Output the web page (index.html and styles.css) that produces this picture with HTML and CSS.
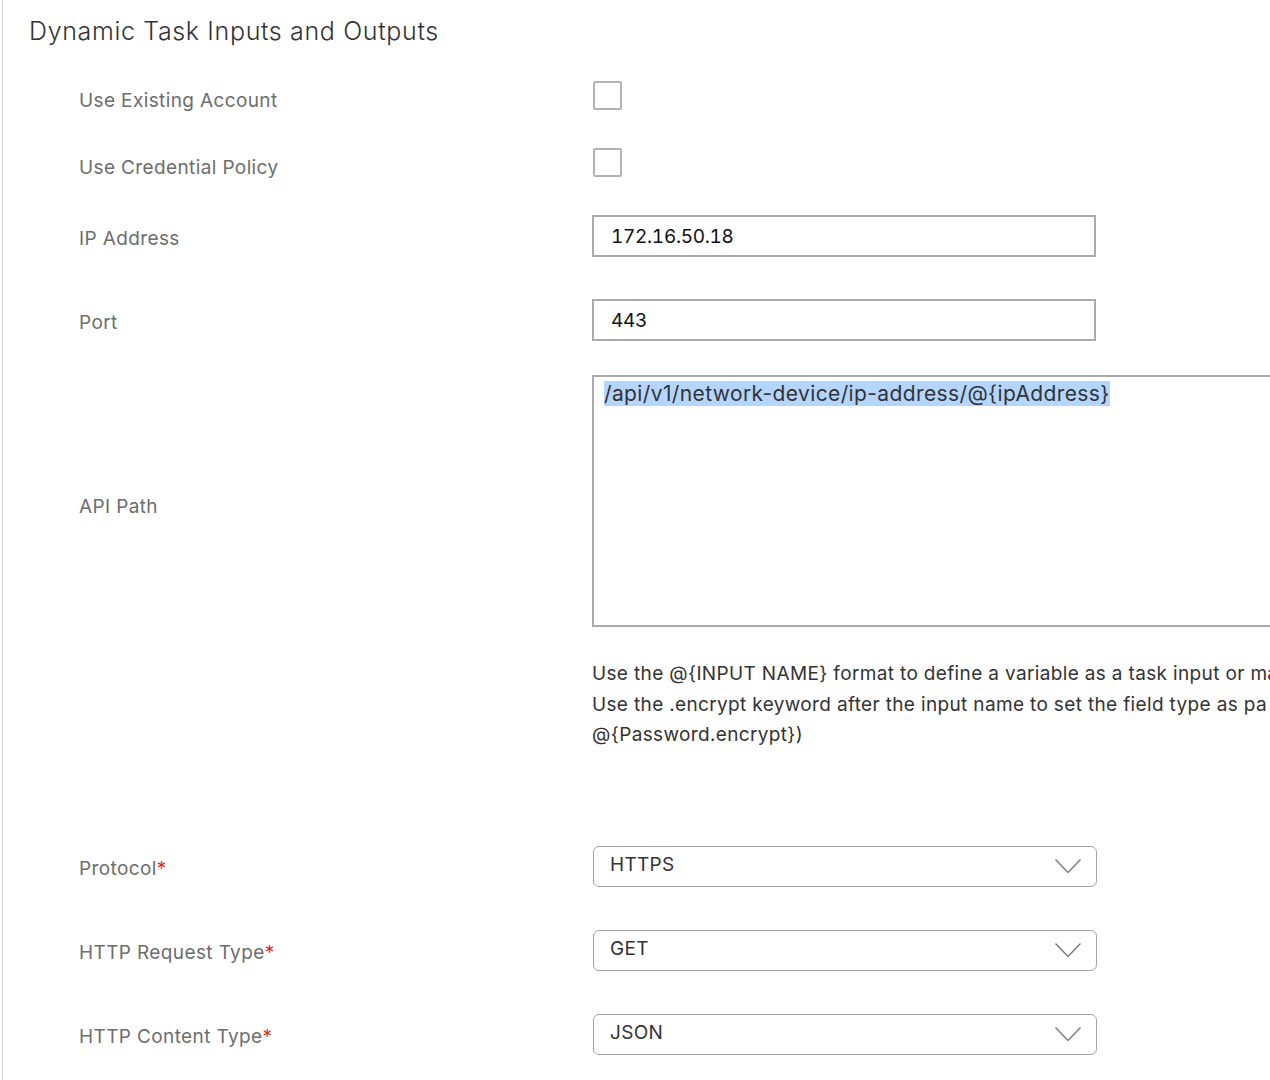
FILE: index.html
```html
<!DOCTYPE html>
<html lang="en">
<head>
<meta charset="utf-8">
<title>Dynamic Task Inputs and Outputs</title>
<link rel="stylesheet" href="styles.css">
</head>
<body>
<div class="panel">
  <h2 class="title">Dynamic Task Inputs and Outputs</h2>
  <div class="form">
    <div class="row row-check">
      <div class="label">Use Existing Account</div>
      <div class="control"><span class="checkbox"></span></div>
    </div>
    <div class="row row-check gap-check">
      <div class="label">Use Credential Policy</div>
      <div class="control"><span class="checkbox"></span></div>
    </div>
    <div class="row gap-check">
      <div class="label">IP Address</div>
      <div class="control"><div class="input">172.16.50.18</div></div>
    </div>
    <div class="row">
      <div class="label">Port</div>
      <div class="control"><div class="input">443</div></div>
    </div>
    <div class="row gap-s">
      <div class="label label-low">API Path</div>
      <div class="control"><div class="textarea"><span class="selected">/api/v1/network-device/ip-address/@{ipAddress}</span></div></div>
    </div>
    <div class="row gap-help">
      <div></div>
      <div class="help">Use the @{INPUT NAME} format to define a variable as a task input or ma<br>Use the .encrypt keyword after the input name to set the field type as pa<br>@{Password.encrypt})</div>
    </div>
    <div class="row gap-xl">
      <div class="label">Protocol<span class="req">*</span></div>
      <div class="control">
        <div class="select"><span>HTTPS</span>
          <svg class="chev" width="28" height="16" viewBox="0 0 28 16"><polyline points="1.5,1.5 14,14.5 26.5,1.5" fill="none" stroke="#7a7a7a" stroke-width="1.4"/></svg>
        </div>
      </div>
    </div>
    <div class="row gap-sel">
      <div class="label">HTTP Request Type<span class="req">*</span></div>
      <div class="control">
        <div class="select"><span>GET</span>
          <svg class="chev" width="28" height="16" viewBox="0 0 28 16"><polyline points="1.5,1.5 14,14.5 26.5,1.5" fill="none" stroke="#7a7a7a" stroke-width="1.4"/></svg>
        </div>
      </div>
    </div>
    <div class="row gap-sel">
      <div class="label">HTTP Content Type<span class="req">*</span></div>
      <div class="control">
        <div class="select"><span>JSON</span>
          <svg class="chev" width="28" height="16" viewBox="0 0 28 16"><polyline points="1.5,1.5 14,14.5 26.5,1.5" fill="none" stroke="#7a7a7a" stroke-width="1.4"/></svg>
        </div>
      </div>
    </div>
  </div>
</div>
</body>
</html>
```
FILE: styles.css
```css
html, body {
  margin: 0;
  padding: 0;
  background: #ffffff;
  overflow: hidden;
}
body {
  font-family: Inter, "Liberation Sans", sans-serif;
  color: #333333;
}
.panel {
  margin-left: 2px;
  border-left: 1px solid #d4d4d4;
  min-height: 1080px;
}
.title {
  margin: 0;
  padding: 16px 0 0 26px;
  font-size: 25px;
  line-height: 30px;
  font-weight: 300;
  letter-spacing: 0.65px;
  color: #333333;
}
.form {
  display: flex;
  flex-direction: column;
  padding-left: 76px;
  margin-top: 35px;
}
.row {
  display: grid;
  grid-template-columns: 513px 720px;
  align-items: center;
  margin-top: 42px;
}
.row-check { margin-top: 0; }
.gap-check { margin-top: 38px; }
.gap-s { margin-top: 34px; }
.gap-help { margin-top: 32px; }
.gap-xl { margin-top: 95px; }
.gap-sel { margin-top: 43px; }

.label {
  font-size: 19px;
  line-height: 20px;
  letter-spacing: 0.38px;
  color: #6d6d6d;
  padding-top: 5px;
  white-space: nowrap;
}
.row-check .label { line-height: 18px; padding-top: 10px; }
.label-low { padding-top: 12px; }
.req { color: #e0252b; }

.control { display: flex; align-items: center; }

.checkbox {
  display: block;
  width: 25px;
  height: 25px;
  border: 2px solid #b3b3b3;
  border-radius: 2px;
  margin-left: 1px;
}
.input {
  box-sizing: border-box;
  width: 504px;
  height: 42px;
  border: 2px solid #ababab;
  padding-left: 17px;
  display: flex;
  align-items: center;
  font-size: 19px;
  font-variant-numeric: tabular-nums;
  letter-spacing: -0.3px;
  color: #111111;
}
.textarea {
  box-sizing: border-box;
  width: 720px;
  height: 252px;
  border: 2px solid #ababab;
  border-right: none;
  padding: 5px 10px;
  font-size: 21px;
  line-height: 24px;
  letter-spacing: 0.38px;
  color: #333333;
}
.selected { background: #b4d5fe; }
.help {
  font-size: 19px;
  line-height: 30.5px;
  letter-spacing: 0.35px;
  color: #333333;
  white-space: nowrap;
}
.select {
  box-sizing: border-box;
  width: 504px;
  height: 41px;
  margin-left: 1px;
  border: 1.5px solid #a3a3a3;
  border-radius: 6px;
  padding: 0 14px 0 16px;
  display: flex;
  align-items: center;
  justify-content: space-between;
  font-size: 19px;
  letter-spacing: 0.3px;
  color: #333333;
}
.select span { margin-top: -3px; }
.chev { display: block; }
```
